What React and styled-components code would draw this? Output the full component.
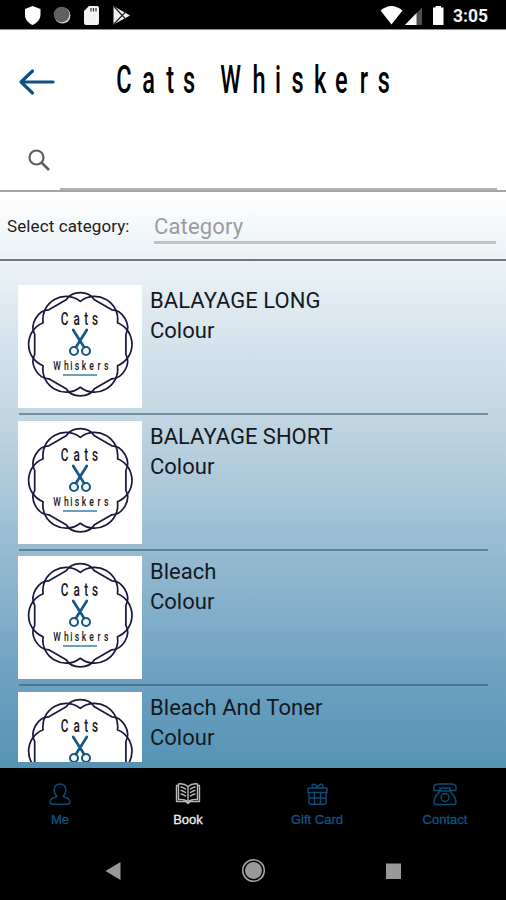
import React from "react";
import styled, { createGlobalStyle } from "styled-components";

const Global = createGlobalStyle`
  * { box-sizing: border-box; }
  body { margin: 0; background: #000; font-family: Roboto, "Noto Sans", sans-serif; }
`;

const Screen = styled.div`
  width: 506px;
  height: 900px;
  display: flex;
  flex-direction: column;
  overflow: hidden;
  background: #000;
`;

const StatusBar = styled.div`
  height: 30px;
  flex: none;
  display: flex;
  justify-content: space-between;
  border-bottom: 1px solid #8c8c8c;
  color: #f4f4f4;
`;

const StatusIcons = styled.svg`
  display: block;
  width: ${(p) => p.$w}px;
  height: 29px;
`;

const StatusRight = styled.div`
  display: flex;
  font-size: 17.5px;
  font-weight: 700;
  line-height: 32px;
  width: 128px;
`;

const Clock = styled.span`
  margin-left: 5px;
`;

const Header = styled.header`
  height: 102px;
  flex: none;
  display: flex;
  background: #fff;
`;

const BackIcon = styled.svg`
  width: 80px;
  height: 102px;
`;

const Title = styled.svg`
  width: 340px;
  height: 102px;
  font-family: Roboto, sans-serif;
  font-weight: 500;
`;

const SearchBar = styled.div`
  height: 60px;
  flex: none;
  display: flex;
  align-items: stretch;
  background: #fff;
  border-bottom: 2px solid #a5a5a5;
`;

const SearchIcon = styled.svg`
  width: 60px;
  height: 57px;
`;

const SearchInput = styled.div`
  width: 437px;
  height: 58px;
  border-bottom: 2px solid #b4b4b4;
`;

const Content = styled.main`
  height: 576px;
  flex: none;
  background: linear-gradient(#ffffff 0, #eaf2f6 70px, #c3d7e3 220px, #94b9cf 368px, #6a9fbf 495px, #5593b5 576px);
`;

const Filter = styled.div`
  height: 69px;
  display: flex;
  align-items: flex-start;
  border-bottom: 2px solid #6d767d;
  padding-left: 7px;
`;

const FilterLabel = styled.label`
  width: 147px;
  padding-top: 23px;
  font-size: 17px;
  line-height: 22px;
  letter-spacing: 0.1px;
  color: #1d2023;
`;

const Select = styled.div`
  width: 342px;
  height: 52px;
  padding-top: 21px;
  font-size: 22px;
  line-height: 28px;
  letter-spacing: 0.15px;
  color: #999c9e;
  border-bottom: 3px solid #bfc3c6;
`;

const List = styled.div`
  height: 501px;
  padding: 24px 18px 0 18px;
  overflow: hidden;
`;

const Row = styled.div`
  height: 135.5px;
  display: flex;
  flex-direction: column;
`;

const RowBody = styled.div`
  height: 128px;
  display: flex;
`;

const Divider = styled.div`
  height: 2px;
  margin: 0 0 0 1px;
  background: rgba(50, 85, 110, 0.55);
`;

const Badge = styled.svg`
  width: 124px;
  height: 123px;
  flex: none;
  background: #fff;
  font-family: Roboto, sans-serif;
`;

const Info = styled.div`
  padding: 1.4px 0 0 8px;
  font-size: 22px;
  line-height: 30px;
  color: #14191e;
`;

const Line = styled.div`
  letter-spacing: ${(p) => p.$track || 0}px;
`;

const TabBar = styled.nav`
  height: 76px;
  flex: none;
  display: grid;
  grid-template-columns: 120px 136px 122px 134px;
  background: #000;
`;

const Tab = styled.div`
  display: flex;
  flex-direction: column;
  align-items: center;
  padding-top: 13px;
  color: ${(p) => (p.$active ? "#f0f0f0" : "#0c5685")};
  font: 13px/17px "Liberation Sans", Arial, sans-serif;
  -webkit-text-stroke: 0.3px currentColor;
  white-space: nowrap;
`;

const TabIcon = styled.svg`
  width: 26px;
  height: 26px;
  margin-bottom: 4px;
  fill: none;
  stroke: ${(p) => (p.$active ? "#b9b9b9" : "#0b4f78")};
  stroke-width: 1.4;
  stroke-linejoin: round;
  stroke-linecap: round;
`;

const SystemNav = styled.svg`
  display: block;
  width: 506px;
  height: 56px;
  flex: none;
`;

const polar = (r, deg) => {
  const a = (deg * Math.PI) / 180;
  return [r * Math.cos(a), r * Math.sin(a)];
};
const place = (radial, lateral, deg) => {
  const [c, s] = polar(1, deg);
  return `${(radial * c - lateral * s).toFixed(2)} ${(radial * s + lateral * c).toFixed(2)}`;
};
const steps = [0, 60, 120, 180, 240, 300];

const scallops = steps
  .map((d, i) => `${i ? "" : "M" + place(37.2, -21.5, d)} C${place(56.5, -13.5, d)} ${place(56.5, 13.5, d)} ${place(37.2, 21.5, d)}`)
  .join(" ") + "Z";
const hexagon = steps
  .map((d, i) => `${i ? "L" : "M"}${place(45.6, -10, d)} L${place(45.6, 10, d)} C${place(54, -8.5, d + 30)} ${place(54, 8.5, d + 30)} ${place(45.6, -10, d + 60)}`)
  .join(" ") + "Z";

function CatsBadge() {
  return (
    <Badge viewBox="0 0 124 123">
      <g transform="translate(62.3 59.3)" fill="none" stroke="#19173b" strokeWidth="1.7" strokeLinejoin="round">
        <path d={scallops} />
        <path d={hexagon} />
      </g>
      <g fill="#161616" fontWeight="500" textAnchor="middle">
        <text transform="scale(.66 1)" fontSize="17.8" x="70.5 89 103.5 116.7" y="40.3">Cats</text>
        <text transform="scale(.66 1)" fontSize="13" x="59.2 73.2 81 89.4 100 111.4 122.7 133.8" y="85">Whiskers</text>
      </g>
      <g fill="none" stroke="#155785" strokeLinecap="round">
        <path d="M55.2 45L66 62M68.8 45L58 62" strokeWidth="2.7" />
        <ellipse cx="56" cy="66" rx="4" ry="4" strokeWidth="2.1" />
        <ellipse cx="68" cy="66" rx="4" ry="4" strokeWidth="2.1" />
      </g>
      <path d="M45 90H79" stroke="#6c9fbd" strokeWidth="2" />
    </Badge>
  );
}

const services = [
  { name: "BALAYAGE LONG", category: "Colour", track: 0.05 },
  { name: "BALAYAGE SHORT", category: "Colour", track: 0 },
  { name: "Bleach", category: "Colour", track: 0 },
  { name: "Bleach And Toner", category: "Colour", track: 0.05 },
];

const tabs = [
  {
    label: "Me",
    icon: <path d="M13 3C9 3 7.2 5.5 7.2 9C7.2 11.5 8.4 14 10 15.2C8.5 17 3 16.5 3 20.5C3 22.5 4 23.3 6 23.3H20C22 23.3 23 22.5 23 20.5C23 16.5 17.5 17 16 15.2C17.6 14 18.8 11.5 18.8 9C18.8 5.5 17 3 13 3Z" />,
  },
  {
    label: "Book",
    active: true,
    icon: <path d="M13 5.5C10 3 6 2.5 3.5 3V18.5C7 18 10 18.5 13 20.5C16 18.5 19 18 22.5 18.5V3C20 2.5 16 3 13 5.5V21M3.5 4.5H1.5V20.5H10.5L13 22.5L15.5 20.5H24.5V4.5H22.5M6 6C8 6 9 7.5 10.5 8M6 9.5C8 9.5 9 11 10.5 11.5M6 13C8 13 9 14.5 10.5 15M20 6C18 6 17 7.5 15.5 8M20 9.5C18 9.5 17 11 15.5 11.5M20 13C18 13 17 14.5 15.5 15" />,
  },
  {
    label: "Gift Card",
    icon: <path d="M4 7H23V11.5H4ZM5 11.5V21.5Q5 23.3 7 23.3H20Q22 23.3 22 21.5V11.5M10.5 11.5V23M16.5 11.5V23M5 17H22M13.5 7C12.5 2.8 7.5 2 8 5L9 7M13.5 7C14.5 2.8 19.5 2 19 5L18 7" />,
  },
  {
    label: "Contact",
    icon: <><path d="M2 9.5H7C8 9.5 8 7 10 7H16C18 7 18 9.5 19 9.5H24V6C24 3.5 21 3 19 3H7C5 3 2 3.5 2 6ZM8 10H18L22 15Q24 18 24 21.5Q24 23.5 22 23.5H4Q2 23.5 2 21.5Q2 18 4 15L8 10V7M18 7V10" /><circle cx="13" cy="16.5" r="4" /></>,
  },
];

export default function App() {
  return (
    <Screen>
      <Global />
      <StatusBar>
        <StatusIcons $w={150} viewBox="0 0 150 29">
          <path d="M32.5 6L40.5 9V14.5C40.5 19.5 37 23 32.5 25C28 23 25 19.5 25 14.5V9Z" fill="#fff" />
          <circle cx="62.5" cy="15.5" r="8" fill="#ccc" />
          <circle cx="61.5" cy="14.5" r="7.8" fill="#606060" />
          <path d="M89 6H97Q99 6 99 8V23Q99 25 97 25H86Q84 25 84 23V11Z" fill="#f3f3f3" />
          <path d="M91 8V11.5M93.5 8V11.5M96 8V11.5" stroke="#333" strokeWidth="1.2" />
          <path d="M113.5 6L130 15.5L113.5 24.5Z" fill="#f0f0f0" />
          <path d="M114 6.5L125.5 19M114 24L125.5 12" stroke="#222" strokeWidth="1.2" />
        </StatusIcons>
        <StatusRight>
          <StatusIcons $w={70} viewBox="378 0 70 29">
            <path d="M380.5 10.5Q391.5 1.5 402.5 10.5L391.5 24.5Z" fill="#fff" />
            <path d="M405 25L422 7.5V25Z" fill="#505050" />
            <path d="M405 25L416.5 13V25Z" fill="#fff" />
            <path d="M435.5 6H441V7.5H443.5V25H433V7.5H435.5Z" fill="#fff" />
          </StatusIcons>
          <Clock>3:05</Clock>
        </StatusRight>
      </StatusBar>
      <Header>
        <BackIcon viewBox="0 0 80 102">
          <path d="M53 52H21M32.5 41L21 52L32.5 63" fill="none" stroke="#0e5182" strokeWidth="3.2" strokeLinecap="round" strokeLinejoin="round" />
        </BackIcon>
        <Title viewBox="80 0 340 102">
          <text
            transform="scale(.62 1)"
            fontSize="38"
            textAnchor="middle"
            y="63.5"
            x="199.8 239.5 274.5 305 340 372 418 448.5 480 516.5 550.5 587 619"
          >
            Cats Whiskers
          </text>
        </Title>
      </Header>
      <SearchBar>
        <SearchIcon viewBox="0 0 60 57">
          <g fill="none" stroke="#606060" strokeWidth="2.2">
            <circle cx="36.5" cy="25.5" r="7" />
            <path d="M41.5 30.5L49 38" strokeWidth="2.6" />
          </g>
        </SearchIcon>
        <SearchInput />
      </SearchBar>
      <Content>
        <Filter>
          <FilterLabel>Select category:</FilterLabel>
          <Select>Category</Select>
        </Filter>
        <List>
          {services.map((s) => (
            <Row key={s.name}>
              <RowBody>
                <CatsBadge />
                <Info>
                  <Line $track={s.track}>{s.name}</Line>
                  <Line>{s.category}</Line>
                </Info>
              </RowBody>
              <Divider />
            </Row>
          ))}
        </List>
      </Content>
      <TabBar>
        {tabs.map((t) => (
          <Tab key={t.label} $active={t.active}>
            <TabIcon $active={t.active} viewBox="0 0 26 26">{t.icon}</TabIcon>
            {t.label}
          </Tab>
        ))}
      </TabBar>
      <SystemNav viewBox="0 0 506 56">
        <path d="M105.5 27L120.5 18V36Z" fill="#999" />
        <circle cx="253.5" cy="26.5" r="10.8" fill="none" stroke="#a5a5a5" strokeWidth="1.5" />
        <circle cx="253.5" cy="26.5" r="8.5" fill="#999" />
        <path d="M386 19.5H401V35H386Z" fill="#999" />
      </SystemNav>
    </Screen>
  );
}
